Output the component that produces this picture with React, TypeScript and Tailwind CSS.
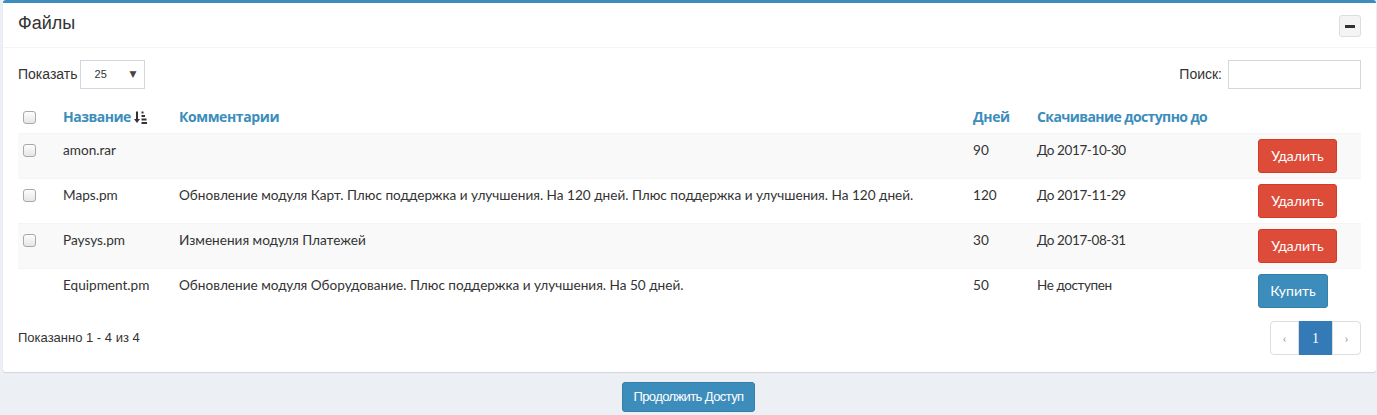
import React from 'react';

interface FileRow {
    id: string;
    name: string;
    comment: string;
    days: number;
    until: string;
    bought: boolean;
}

const FILES: FileRow[] = [
    { id: 'amon', name: 'amon.rar', comment: '', days: 90, until: 'До 2017-10-30', bought: true },
    {
        id: 'maps',
        name: 'Maps.pm',
        comment: 'Обновление модуля Карт. Плюс поддержка и улучшения. На 120 дней. Плюс поддержка и улучшения. На 120 дней.',
        days: 120,
        until: 'До 2017-11-29',
        bought: true
    },
    { id: 'paysys', name: 'Paysys.pm', comment: 'Изменения модуля Платежей', days: 30, until: 'До 2017-08-31', bought: true },
    {
        id: 'equipment',
        name: 'Equipment.pm',
        comment: 'Обновление модуля Оборудование. Плюс поддержка и улучшения. На 50 дней.',
        days: 50,
        until: 'Не доступен',
        bought: false
    }
];

const SortIcon = () => (
    <svg width="13" height="13" viewBox="0 0 13 13" className="inline-block ml-[3px] -mt-[3px]">
        <path d="M3 0.5v9" stroke="#333" strokeWidth="2" />
        <path d="M0 8h6l-3 4z" fill="#333" />
        <rect x="7.5" y="0.5" width="2" height="2" fill="#333" />
        <rect x="7.5" y="4" width="3.5" height="2" fill="#333" />
        <rect x="7.5" y="7.5" width="5" height="2" fill="#333" />
        <rect x="7.5" y="11" width="5.5" height="2" fill="#333" />
    </svg>
);

const Checkbox = () => (
    <span className="block w-[13px] h-[13px] rounded-[3px] border border-[#a9a9a9] bg-gradient-to-b from-[#fdfdfd] to-[#e6e6e6]" />
);

export default function App() {
    return (
        <div className="min-h-[415px] bg-[#ecf0f5] pl-[3px] pr-[1px] pt-0 font-['Liberation_Sans',Arial,sans-serif] text-[#333]">
            <div className="bg-white border-t-[3px] border-[#3c8dbc] rounded-[3px] shadow-[0_1px_1px_rgba(0,0,0,0.12)]">
                <div className="flex items-start justify-between h-[45px] px-[15px] pt-[12px] border-b border-[#f4f4f4]">
                    <h3 className="text-[18px] leading-[17px] text-[#333]">Файлы</h3>
                    <button className="w-[22px] h-[22px] flex items-center justify-center rounded-[3px] border border-[#ddd] bg-[#f4f4f4]">
                        <span className="block w-[10px] h-[3px] bg-[#333]" />
                    </button>
                </div>

                <div className="px-[15px] pt-[12px] pb-[17px]">
                    <div className="flex items-center justify-between h-[29px]">
                        <label className="flex items-center text-[14px]">
                            Показать
                            <span className="ml-[2px] flex items-center justify-between w-[65px] h-[29px] border border-[#d2d6de] pl-[14px] pr-[7px]">
                                <span className="text-[11px]">25</span>
                                <span className="text-[9px] text-[#444] font-['DejaVu_Sans',sans-serif]">▼</span>
                            </span>
                        </label>
                        <label className="flex items-center text-[14px]">
                            Поиск:
                            <span className="ml-[6px] block w-[133px] h-[29px] border border-[#d2d6de]" />
                        </label>
                    </div>

                    <table className="w-full mt-[16px] table-fixed border-collapse text-[13.6px] font-['Lato',sans-serif]">
                        <colgroup>
                            <col className="w-[37px]" />
                            <col className="w-[116px]" />
                            <col />
                            <col className="w-[64px]" />
                            <col className="w-[221px]" />
                            <col className="w-[111px]" />
                        </colgroup>
                        <thead>
                            <tr className="h-[28px] text-left text-[#3c8dbc] font-bold text-[14px] font-['Open_Sans',sans-serif]">
                                <th className="pl-[5px] pb-[3px] align-middle"><Checkbox /></th>
                                <th className="px-[8px] pb-[4px] align-middle tracking-[-0.5px]">Название<SortIcon /></th>
                                <th className="px-[8px] pb-[4px] align-middle tracking-[-0.4px]">Комментарии</th>
                                <th className="px-[8px] pb-[4px] align-middle tracking-[-0.4px]">Дней</th>
                                <th className="px-[8px] pb-[4px] align-middle tracking-[-0.6px] whitespace-nowrap">Скачивание доступно до</th>
                                <th />
                            </tr>
                        </thead>
                        <tbody>
                            {FILES.map((file, i) => (
                                <tr key={file.id} className={`h-[45px] border-t border-[#f4f4f4] ${i % 2 === 0 ? 'bg-[#f9f9f9]' : 'bg-white'}`}>
                                    <td className="pl-[5px] pt-[10px] align-top">{file.bought && <Checkbox />}</td>
                                    <td className="px-[8px] pt-[6px] align-top">{file.name}</td>
                                    <td className="px-[8px] pt-[6px] align-top whitespace-nowrap">{file.comment}</td>
                                    <td className="px-[8px] pt-[6px] align-top">{file.days}</td>
                                    <td className="px-[8px] pt-[6px] align-top text-[13.5px] tracking-[-0.4px]">{file.until}</td>
                                    <td className="px-[8px] pt-[5px] align-top">
                                        {file.bought ? (
                                            <button className="h-[34px] w-[79px] rounded-[3px] bg-[#dd4b39] border border-[#d73925] text-white text-[14px]">Удалить</button>
                                        ) : (
                                            <button className="h-[34px] w-[70px] rounded-[3px] bg-[#3c8dbc] border border-[#367fa9] text-white text-[14px]">Купить</button>
                                        )}
                                    </td>
                                </tr>
                            ))}
                        </tbody>
                    </table>

                    <div className="flex items-center justify-between mt-[8px]">
                        <span className="text-[13px]">Показанно 1 - 4 из 4</span>
                        <div className="flex h-[34px] text-[12px] font-['Liberation_Serif',serif]">
                            <span className="w-[29px] flex items-center justify-center border border-[#ddd] rounded-l-[4px] text-[#999]">‹</span>
                            <span className="w-[33px] flex items-center justify-center bg-[#337ab7] border border-[#337ab7] text-white text-[14px]">1</span>
                            <span className="w-[29px] flex items-center justify-center border border-[#ddd] rounded-r-[4px] text-[#999]">›</span>
                        </div>
                    </div>
                </div>
            </div>

            <div className="flex justify-center pt-[10px] pr-[2px]">
                <button className="h-[30px] w-[133px] rounded-[3px] bg-[#3c8dbc] border border-[#367fa9] text-white text-[13px] tracking-[-0.6px]">Продолжить Доступ</button>
            </div>
        </div>
    );
}
